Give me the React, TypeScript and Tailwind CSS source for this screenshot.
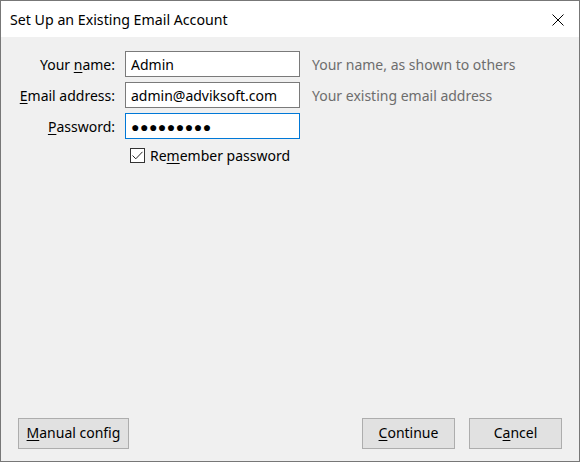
import React, { useState } from 'react';

const font = { fontFamily: '"Segoe UI", "Noto Sans", "Open Sans", sans-serif' };

function Key({ children }: { children: React.ReactNode }) {
  return <span className="underline underline-offset-2 decoration-1">{children}</span>;
}

function DialogButton({ children, className = '' }: { children: React.ReactNode; className?: string }) {
  return (
    <button
      className={`h-[31px] pb-[2px] border border-[#adadad] bg-[#e1e1e1] text-[14px] text-black leading-none ${className}`}
    >
      {children}
    </button>
  );
}

export default function App() {
  const [name, setName] = useState('Admin');
  const [email, setEmail] = useState('admin@adviksoft.com');
  const [remember, setRemember] = useState(true);

  return (
    <div
      className="w-[580px] h-[462px] flex flex-col border border-[#777777] bg-[#f0f0f0] text-black overflow-hidden"
      style={font}
    >
      {/* Title bar */}
      <div className="h-[36px] shrink-0 bg-white flex items-center justify-between pl-[9px] pr-[15px] pt-[1px]">
        <span className="text-[14.2px]">Set Up an Existing Email Account</span>
        <svg width="12" height="12" viewBox="0 0 12 12" className="block">
          <path d="M0.5 0.5L11.5 11.5M11.5 0.5L0.5 11.5" stroke="#000" strokeWidth="1" />
        </svg>
      </div>

      {/* Form */}
      <div className="flex-1 pt-[14px]">
        <div className="grid grid-cols-[114px_175px_1fr] gap-x-[10px] gap-y-[5px] items-center text-[14px]">
          <label className="text-right">Your <Key>n</Key>ame:</label>
          <input
            value={name}
            onChange={(e) => setName(e.target.value)}
            className="h-[26px] border border-[#7a7a7a] bg-white px-[5px] outline-none"
          />
          <span className="pl-[2px] text-[#6d6d6d]">Your name, as shown to others</span>

          <label className="text-right"><Key>E</Key>mail address:</label>
          <input
            value={email}
            onChange={(e) => setEmail(e.target.value)}
            className="h-[26px] border border-[#7a7a7a] bg-white px-[5px] outline-none"
          />
          <span className="pl-[2px] text-[#6d6d6d]">Your existing email address</span>

          <label className="text-right"><Key>P</Key>assword:</label>
          <div className="h-[26px] border border-[#0078d7] bg-white px-[5px] flex items-center text-[14px] tracking-[0.5px]">
            ●●●●●●●●●
          </div>
          <span />

          <span />
          <label className="col-span-2 mt-[1px] flex items-center gap-[5px] pl-[5px] cursor-pointer">
            <span
              onClick={() => setRemember(!remember)}
              className="w-[15px] h-[15px] border border-[#333333] bg-white flex items-center justify-center"
            >
              {remember && (
                <svg width="11" height="9" viewBox="0 0 11 9">
                  <path d="M0.5 4.5L3.8 7.8L10.5 0.8" fill="none" stroke="#222" strokeWidth="1" />
                </svg>
              )}
            </span>
            <span>Re<Key>m</Key>ember password</span>
          </label>
        </div>
      </div>

      {/* Footer */}
      <div className="flex items-center px-[17px] pb-[12px]">
        <DialogButton className="w-[111px]"><Key>M</Key>anual config</DialogButton>
        <div className="flex-1" />
        <div className="flex gap-[14px]">
          <DialogButton className="w-[93px]"><Key>C</Key>ontinue</DialogButton>
          <DialogButton className="w-[93px]">C<Key>a</Key>ncel</DialogButton>
        </div>
      </div>
    </div>
  );
}
